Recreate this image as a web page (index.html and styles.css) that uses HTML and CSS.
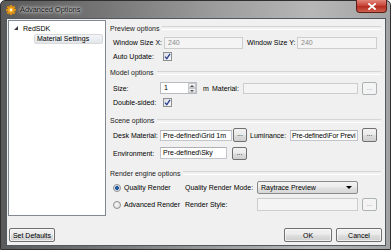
FILE: index.html
```html
<!DOCTYPE html>
<html lang="en">
  <head>
    <meta charset="UTF-8" />
    <title>Advanced Options</title>
    <link rel="stylesheet" href="styles.css">
  </head>
  <body>
    <div class="window">
      <div class="titlebar">
        <svg class="app-icon" width="10" height="10" viewBox="0 0 10 10">
          <g fill="#f0a41c" stroke="#b8700c" stroke-width="0.4">
            <rect x="4" y="0" width="2" height="10" />
            <rect x="0" y="4" width="10" height="2" />
            <rect x="4" y="0" width="2" height="10" transform="rotate(45 5 5)" />
            <rect x="4" y="0" width="2" height="10" transform="rotate(-45 5 5)" />
            <circle cx="5" cy="5" r="3.4" />
          </g>
          <circle cx="5" cy="5" r="1.4" fill="#fff3c8" />
        </svg>
        <span class="title">Advanced Options</span>
        <span class="close-btn">
          <svg width="10" height="7" viewBox="0 0 10 7">
            <path d="M2 1 L8 6 M8 1 L2 6" stroke="#fff" stroke-width="1.8" stroke-linecap="square" />
          </svg>
        </span>
      </div>

      <div class="client">
        <div class="main">
          <div class="tree">
            <div class="node"><span class="expander"></span>RedSDK</div>
            <div class="node child"><span class="selected">Material Settings</span></div>
          </div>

          <div class="panel">
            <div class="group-title">Preview options</div>
            <div class="row row-preview">
              <span class="label w51">Window Size X:</span>
              <span class="field disabled fx">240</span>
              <span class="label lbl-y">Window Size Y:</span>
              <span class="field disabled fy">240</span>
            </div>
            <div class="row row-auto">
              <span class="label w50">Auto Update:</span>
              <span class="check">
                <svg width="7" height="7" viewBox="0 0 7 7">
                  <path d="M1 3.6 L2.8 5.6 L6 0.8" fill="none" stroke="#2a3f8f" stroke-width="1.3" />
                </svg>
              </span>
            </div>

            <div class="group-title gt-model">Model options</div>
            <div class="row row-size">
              <span class="label w47">Size:</span>
              <span class="spin">
                <span class="spin-value">1</span>
                <span class="spin-btns">
                  <span class="spin-up"></span>
                  <span class="spin-down"></span>
                </span>
              </span>
              <span class="unit">m</span>
              <span class="label w31">Material:</span>
              <span class="field disabled fmat"></span>
              <span class="btn-dots disabled-btn">...</span>
            </div>
            <div class="row row-double">
              <span class="label w50">Double-sided:</span>
              <span class="check">
                <svg width="7" height="7" viewBox="0 0 7 7">
                  <path d="M1 3.6 L2.8 5.6 L6 0.8" fill="none" stroke="#2a3f8f" stroke-width="1.3" />
                </svg>
              </span>
            </div>

            <div class="group-title gt-scene">Scene options</div>
            <div class="row row-desk">
              <span class="label w47">Desk Material:</span>
              <span class="field fdesk">Pre-defined\Grid 1m</span>
              <span class="btn-dots bd-desk">...</span>
              <span class="label lbl-lum">Luminance:</span>
              <span class="field flum">Pre-defined\For Previ</span>
              <span class="btn-dots bd-lum">...</span>
            </div>
            <div class="row row-env">
              <span class="label w47">Environment:</span>
              <span class="field fenv">Pre-defined\Sky</span>
              <span class="btn-dots bd-env">...</span>
            </div>

            <div class="group-title gt-render">Render engine options</div>
            <div class="row row-quality">
              <span class="radio checked"></span>
              <span class="label w61">Quality Render</span>
              <span class="label w72">Quality Render Mode:</span>
              <span class="combo">Raytrace Preview<span class="combo-arrow"></span></span>
            </div>
            <div class="row row-advanced">
              <span class="radio"></span>
              <span class="label w61">Advanced Render</span>
              <span class="label w72">Render Style:</span>
              <span class="field disabled fstyle"></span>
              <span class="btn-dots disabled-btn">...</span>
            </div>
          </div>
        </div>

        <div class="footer">
          <span class="button btn-defaults">Set Defaults</span>
          <div class="footer-right">
            <span class="button btn-ok">OK</span>
            <span class="button btn-cancel">Cancel</span>
          </div>
        </div>
      </div>
    </div>
  </body>
</html>
```

FILE: styles.css
```css
* {
  margin: 0;
  padding: 0;
  box-sizing: border-box;
}

body {
  width: 391px;
  height: 250px;
  overflow: hidden;
  font-family: "Liberation Sans", Arial, sans-serif;
  font-size: 7px;
  color: #000;
  background: #fff;
}

/* window frame */

.window {
  width: 391px;
  height: 250px;
  display: flex;
  flex-direction: column;
  border: 1px solid #2f2f2f;
  border-radius: 5px 5px 0 0;
  background: linear-gradient(
    to right,
    #5a5a5a 0%,
    #747474 25%,
    #9c9c9c 55%,
    #b7b7b7 80%,
    #a2a2a2 100%
  );
}

.titlebar {
  height: 17px;
  display: flex;
  align-items: center;
  padding-left: 5px;
}

.app-icon {
  margin-top: 1px;
}

.title {
  margin-left: 4px;
  font-size: 7.4px;
  color: #111;
  text-shadow: 0 0 3px #fff, 0 0 5px rgba(255, 255, 255, 0.9);
}

.close-btn {
  margin-left: auto;
  margin-right: 3px;
  align-self: flex-start;
  margin-top: -1px;
  width: 31px;
  height: 13px;
  border: 1px solid #5a1f18;
  border-top: none;
  border-radius: 0 0 4px 4px;
  background: linear-gradient(#e2877c, #c9463a 45%, #b52d20 55%, #d0604f);
  display: flex;
  align-items: center;
  justify-content: center;
}

.client {
  flex: 1;
  margin: 0 4px 3px 5px;
  border: 1px solid #505860;
  background: #f0f0f0;
  padding: 1px 0 0 1px;
}

.main {
  height: 196px;
  display: grid;
  grid-template-columns: 98px 1fr;
  column-gap: 4px;
}

/* tree */

.tree {
  background: #fff;
  border: 1px solid #828790;
  padding-top: 2px;
}

.node {
  height: 10px;
  display: flex;
  align-items: center;
  padding-left: 5px;
}

.expander {
  width: 0;
  height: 0;
  border-left: 4px solid transparent;
  border-bottom: 4px solid #3c3c3c;
  margin-right: 5px;
}

.node.child {
  margin-top: 1px;
  padding-left: 25px;
}

.selected {
  height: 10px;
  line-height: 8px;
  padding: 0 2px;
  width: 69px;
  border: 1px solid #d9d9d9;
  border-radius: 2px;
  background: linear-gradient(#f2f4f7, #e2e7ec);
}

/* options panel */

.panel {
  padding-right: 4px;
}

.group-title {
  height: 16px;
  display: flex;
  align-items: center;
  color: #1a1a1a;
}

.group-title::after {
  content: "";
  flex: 1;
  margin-left: 3px;
  height: 2px;
  border-top: 1px solid #d5d5d5;
  border-bottom: 1px solid #fff;
}

.gt-model {
  height: 17px;
}

.gt-scene {
  margin-top: 3px;
  height: 15px;
}

.gt-render {
  margin-top: 5px;
  height: 16px;
}

.row {
  display: flex;
  align-items: center;
  padding-left: 3px;
}

.row-preview { height: 13px; }
.row-auto { height: 15px; }
.row-size { height: 14px; }
.row-double { height: 15px; }
.row-desk { height: 14px; }
.row-env { height: 14px; margin-top: 4px; }
.row-quality { height: 13px; }
.row-advanced { height: 13px; margin-top: 4px; }

.label {
  flex-shrink: 0;
  white-space: nowrap;
}

.w31 { width: 31px; }
.w47 { width: 47px; }
.w50 { width: 50px; }
.w51 { width: 51px; }
.w61 { width: 61px; }
.w72 { width: 72px; }

.lbl-y {
  width: 50px;
  margin-left: 4px;
}

.lbl-lum {
  width: 40px;
  margin-left: 3px;
}

.unit {
  width: 9px;
  margin-left: 6px;
}

/* inputs */

.field {
  flex-shrink: 0;
  height: 11px;
  line-height: 9px;
  padding-left: 2px;
  background: #fff;
  border: 1px solid #c2c6cc;
  border-top-color: #aeb1b6;
  white-space: nowrap;
  overflow: hidden;
}

.field.disabled {
  background: #f4f4f4;
  border-color: #cdcdcd;
  color: #8a8a8a;
  padding-left: 3px;
}

.fx { width: 79px; height: 12px; line-height: 10px; }
.fy { width: 80px; height: 12px; line-height: 10px; }
.fmat { width: 115px; }
.fdesk { width: 72px; }
.flum { width: 68px; padding-left: 1px; letter-spacing: -0.15px; }
.fenv { width: 67px; height: 12px; line-height: 10px; }
.fstyle { width: 101px; height: 13px; }

.spin {
  width: 37px;
  height: 12px;
  display: flex;
  background: #fff;
  border: 1px solid #b8bcc2;
}

.spin-value {
  flex: 1;
  line-height: 10px;
  padding-left: 3px;
}

.spin-btns {
  width: 8px;
  display: flex;
  flex-direction: column;
}

.spin-up,
.spin-down {
  flex: 1;
  border: 1px solid #c4c8cc;
  background: linear-gradient(#f6f6f6, #e2e2e2);
  position: relative;
}

.spin-up::after,
.spin-down::after {
  content: "";
  position: absolute;
  left: 1px;
  top: 1px;
  border-left: 2px solid transparent;
  border-right: 2px solid transparent;
}

.spin-up::after {
  border-bottom: 2px solid #555;
}

.spin-down::after {
  border-top: 2px solid #555;
}

.check {
  width: 9px;
  height: 9px;
  border: 1px solid #8e8f8f;
  background: linear-gradient(135deg, #dcdfe6, #f6f7f9);
  display: flex;
  align-items: center;
  justify-content: center;
}

.radio {
  width: 8px;
  height: 8px;
  border-radius: 50%;
  border: 1px solid #8e8f8f;
  background: radial-gradient(circle at 40% 40%, #f8f8f8, #d6d6d6);
  margin-right: 3px;
  flex-shrink: 0;
}

.radio.checked {
  background: radial-gradient(circle, #2b6cc0 0, #1a4f94 1.6px, #d6dde6 2.2px, #eef0f3 4px);
}

/* buttons */

.btn-dots {
  flex-shrink: 0;
  width: 15px;
  height: 13px;
  margin-left: 4px;
  border: 1px solid #707070;
  border-radius: 2px;
  background: linear-gradient(#f2f2f2 0%, #ebebeb 45%, #dddddd 55%, #cfcfcf 100%);
  display: flex;
  justify-content: center;
  line-height: 9px;
  font-size: 6.5px;
}

.btn-dots.disabled-btn {
  border-color: #adb2b5;
  background: #f4f4f4;
  color: #9a9a9a;
}

.bd-desk {
  width: 14px;
  height: 14px;
  margin-left: 1px;
}

.bd-lum {
  height: 14px;
}

.bd-env {
  margin-left: 5px;
}

.combo {
  flex-shrink: 0;
  width: 101px;
  height: 13px;
  display: flex;
  align-items: center;
  padding-left: 3px;
  border: 1px solid #8a8a8a;
  border-radius: 2px;
  background: linear-gradient(#f3f3f3 0%, #ececec 45%, #e0e0e0 55%, #d8d8d8 100%);
}

.combo-arrow {
  margin-left: auto;
  margin-right: 5px;
  border-left: 3px solid transparent;
  border-right: 3px solid transparent;
  border-top: 3px solid #000;
}

/* footer */

.footer {
  margin-top: 12px;
  display: flex;
  justify-content: space-between;
  align-items: flex-start;
  padding: 0 3px 0 1px;
}

.footer-right {
  display: flex;
  gap: 4px;
}

.button {
  height: 14px;
  display: flex;
  align-items: center;
  justify-content: center;
  border: 1px solid #707070;
  border-radius: 2px;
  background: linear-gradient(#f2f2f2 0%, #ebebeb 45%, #dddddd 55%, #cfcfcf 100%);
  box-shadow: inset 0 0 0 1px rgba(255, 255, 255, 0.6);
}

.btn-defaults { width: 46px; }
.btn-ok { width: 48px; }
.btn-cancel { width: 46px; }
```
